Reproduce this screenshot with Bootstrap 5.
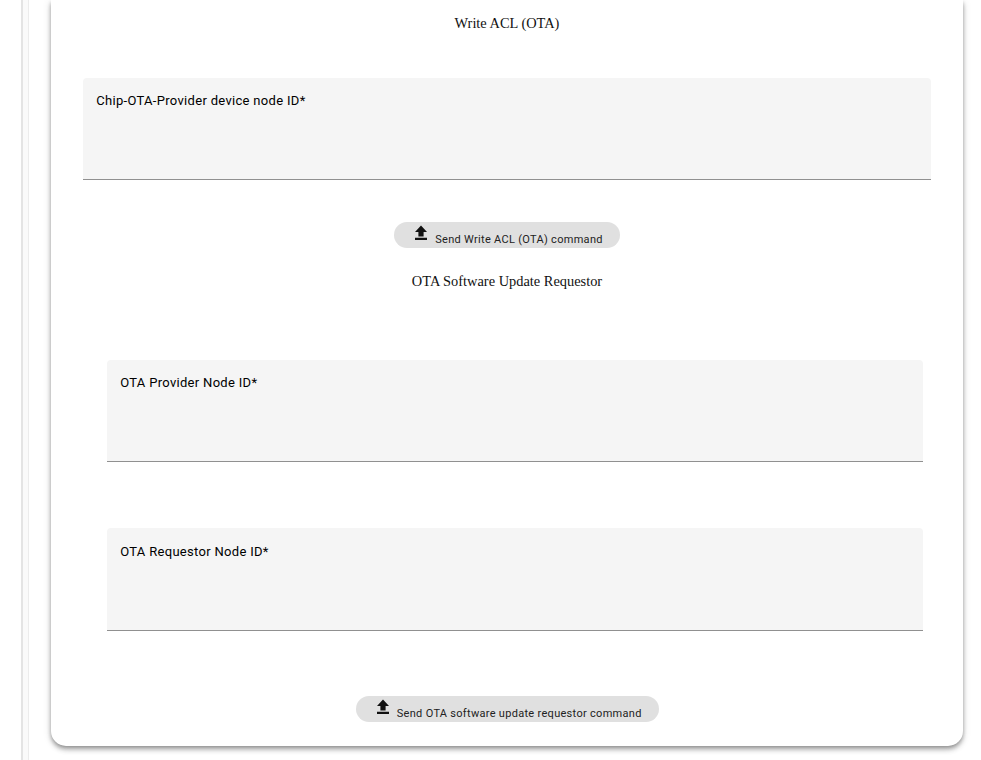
<!DOCTYPE html>
<html lang="en">
<head>
    <meta charset="UTF-8">
    <meta name="viewport" content="width=device-width, initial-scale=1.0">
    <title>OTA</title>
    <link href="https://cdn.jsdelivr.net/npm/bootstrap@5.3.0/dist/css/bootstrap.min.css" rel="stylesheet">
    <style>
        html, body {
            height: 760px;
            overflow: hidden;
            background: #fff;
        }
        .page-wrap {
            height: 760px;
            padding-left: 21px;
        }
        .side-rail {
            width: 8px;
            flex: none;
            background: #fafafa;
            border-left: 2px solid #e4e4e4;
            border-right: 1px solid #ececec;
        }
        .main-panel {
            width: 912px;
            height: 746px;
            margin-left: 22px;
            flex: none;
            padding-top: 14px;
            background: #fff;
            border-radius: 0 0 15px 15px;
            box-shadow: 0 2px 4px -1px rgba(0,0,0,.3), 0 4px 5px 0 rgba(0,0,0,.2), 0 1px 10px 0 rgba(0,0,0,.12);
        }
        .sec-title {
            font-family: "Liberation Serif", serif;
            font-size: 14.4px;
            line-height: 18px;
            color: #111;
            text-align: center;
            margin: 0;
        }
        .sec-title-req {
            margin-top: 24px;
        }
        .text-field {
            height: 102px;
            padding: 15px 13px 0 13.2px;
            background: #f5f5f5;
            border-bottom: 1px solid #909090;
            border-radius: 4px 4px 0 0;
        }
        .text-field label {
            display: block;
            font-family: Roboto, sans-serif;
            font-size: 13px;
            line-height: 16px;
            letter-spacing: .31px;
            color: #000;
        }
        .text-field input {
            width: 100%;
            height: 40px;
            padding: 0;
            border: 0;
            outline: 0;
            background: transparent;
        }
        .field-one {
            margin: 46px 32px 0;
        }
        .field-req {
            margin: 0 40px 0 56px;
        }
        .field-provider {
            margin-top: 70px;
        }
        .field-requestor {
            height: 103px;
            padding-top: 16px;
            margin-top: 66px;
        }
        .btn-row-acl {
            margin-top: 42px;
        }
        .btn-row-req {
            margin-top: 65px;
            padding-left: 1px;
        }
        .send-btn {
            height: 26px;
            padding: 0 17px 0 20px;
            border: 0;
            border-radius: 13px;
            background: #e0e0e0;
            font-family: Roboto, sans-serif;
            font-size: 11px;
            letter-spacing: .3px;
            color: #222;
        }
        .send-btn-wide {
            padding-right: 17.5px;
        }
        .send-btn svg {
            width: 14px;
            height: 16px;
            margin-top: -5px;
            margin-right: 7px;
        }
        .send-btn span {
            padding-top: 11px;
        }
    </style>
</head>
<body>
    <div class="page-wrap d-flex">
        <div class="side-rail"></div>
        <div class="main-panel">
            <p class="sec-title">Write ACL (OTA)</p>
            <div class="text-field field-one">
                <label for="providerDevice">Chip-OTA-Provider device node ID*</label>
                <input id="providerDevice" type="text">
            </div>
            <div class="btn-row-acl d-flex justify-content-center">
                <button class="send-btn d-inline-flex align-items-center" type="button">
                    <svg viewBox="0 0 14 16" fill="#111"><path d="M7 .5 1 7h3.4v4.6h5.2V7H13zM1 12.8h12V15H1z"/></svg>
                    <span>Send Write ACL (OTA) command</span>
                </button>
            </div>
            <p class="sec-title sec-title-req">OTA Software Update Requestor</p>
            <div class="text-field field-req field-provider">
                <label for="providerNode">OTA Provider Node ID*</label>
                <input id="providerNode" type="text">
            </div>
            <div class="text-field field-req field-requestor">
                <label for="requestorNode">OTA Requestor Node ID*</label>
                <input id="requestorNode" type="text">
            </div>
            <div class="btn-row-req d-flex justify-content-center">
                <button class="send-btn send-btn-wide d-inline-flex align-items-center" type="button">
                    <svg viewBox="0 0 14 16" fill="#111"><path d="M7 .5 1 7h3.4v4.6h5.2V7H13zM1 12.8h12V15H1z"/></svg>
                    <span>Send OTA software update requestor command</span>
                </button>
            </div>
        </div>
    </div>
    <script src="https://cdn.jsdelivr.net/npm/bootstrap@5.3.0/dist/js/bootstrap.bundle.min.js"></script>
</body>
</html>
